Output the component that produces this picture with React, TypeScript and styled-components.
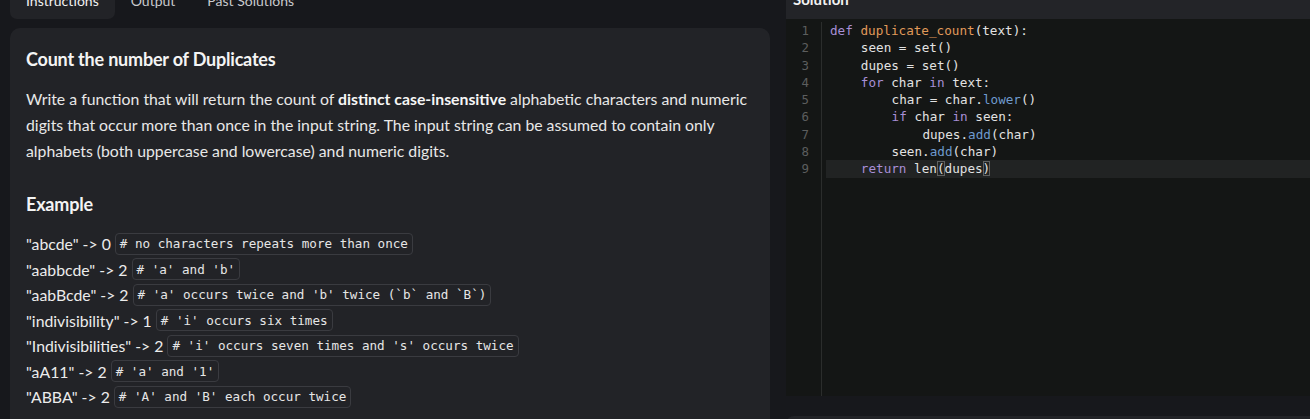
import { createGlobalStyle, styled } from "styled-components";

const GlobalStyle = createGlobalStyle`
    html, body {
        margin: 0;
        padding: 0;
        background: #17181c;
        overflow: hidden;
    }
    * { box-sizing: border-box; }
`;

const Page = styled.div`
    display: flex;
    gap: 16px;
    padding-left: 10px;
    width: 1310px;
    height: 419px;
    overflow: hidden;
    font-family: Lato, "Noto Sans", sans-serif;
    color: #ececec;
`;

/* 왼쪽: 탭 + 문제 설명 */
const LeftColumn = styled.div`
    width: 760px;
    flex-shrink: 0;
    display: flex;
    flex-direction: column;
`;

const TabBar = styled.div`
    display: flex;
    flex-shrink: 0;
    height: 40px;
    margin-top: -21px;
`;

const Tab = styled.div<{ $active?: boolean }>`
    display: flex;
    align-items: center;
    padding: 3px 16px 0;
    font-size: 14px;
    color: ${p => (p.$active ? "#f2f2f2" : "#c9cacd")};
    background: ${p => (p.$active ? "#222327" : "transparent")};
    border-radius: 0 0 7px 7px;
`;

const Card = styled.div`
    margin-top: 9px;
    flex: 1;
    min-height: 0;
    background: #222327;
    border-radius: 10px 10px 0 0;
    padding: 20px 16px;
`;

const Heading = styled.h2<{ $gap?: number }>`
    margin: ${p => p.$gap ?? 0}px 0 0;
    font-size: 18px;
    line-height: 22px;
    font-weight: 700;
    letter-spacing: -0.2px;
    color: #f4f4f4;
`;

const Paragraph = styled.p`
    margin: 16px 0 0;
    font-size: 15.8px;
    line-height: 26px;
    white-space: nowrap;
    color: #e8e8e8;
    strong { font-weight: 700; color: #f6f6f6; }
`;

const ExampleList = styled.div`
    margin-top: 16px;
    display: flex;
    flex-direction: column;
`;

const ExampleRow = styled.div`
    display: flex;
    align-items: center;
    gap: 4px;
    height: 25.5px;
    font-size: 15.8px;
    color: #ececec;
`;

const InlineCode = styled.code`
    display: inline-flex;
    align-items: center;
    height: 22px;
    padding: 0 4px;
    border: 1px solid #3a3b40;
    border-radius: 4px;
    font-family: "DejaVu Sans Mono", "Liberation Mono", monospace;
    font-size: 12.6px;
    color: #e6e6e6;
    white-space: pre;
`;

/* 오른쪽: 에디터 */
const RightColumn = styled.div`
    flex: 1;
    display: flex;
    flex-direction: column;
`;

const EditorHeader = styled.div`
    flex-shrink: 0;
    height: 40px;
    margin-top: -21px;
    background: #232428;
    display: flex;
    align-items: center;
    padding-left: 7px;
    font-size: 15px;
    font-weight: 700;
    color: #f2f2f2;
`;

const Editor = styled.div`
    flex-shrink: 0;
    height: 377px;
    background: #141615;
    display: flex;
    padding-top: 3px;
`;

const Gutter = styled.div`
    width: 36px;
    border-right: 1px solid #2b2d2c;
    display: flex;
    flex-direction: column;
    align-items: flex-end;
    padding-right: 12px;
`;

const LineNo = styled.div`
    height: 17.3px;
    line-height: 17.3px;
    font-family: "DejaVu Sans Mono", "Liberation Mono", monospace;
    font-size: 12.4px;
    color: #5c5e5e;
`;

const CodeArea = styled.div`
    flex: 1;
    padding-left: 4px;
`;

const CodeLine = styled.div<{ $active?: boolean }>`
    height: 17.3px;
    line-height: 17.3px;
    padding-left: 4px;
    font-family: "DejaVu Sans Mono", "Liberation Mono", monospace;
    font-size: 12.65px;
    color: #e2e2e2;
    white-space: pre;
    background: ${p => (p.$active ? "#212323" : "transparent")};
`;

const Indent = styled.span<{ $level: number }>`
    display: inline-block;
    width: ${p => p.$level * 30.8}px;
`;

const Kw = styled.span` color: #a88fd6; `;
const Fn = styled.span` color: #e09a5a; `;
const Method = styled.span` color: #6f9bcf; `;
const Bracket = styled.span`
    outline: 1px solid #5f6161;
    outline-offset: -1px;
`;

const BottomPanel = styled.div`
    flex-shrink: 0;
    margin-top: 20px;
    height: 30px;
    background: #222327;
    border-radius: 8px 0 0 0;
`;

const examples: [string, string][] = [
    ['"abcde" -> 0', "# no characters repeats more than once"],
    ['"aabbcde" -> 2', "# 'a' and 'b'"],
    ['"aabBcde" -> 2', "# 'a' occurs twice and 'b' twice (`b` and `B`)"],
    ['"indivisibility" -> 1', "# 'i' occurs six times"],
    ['"Indivisibilities" -> 2', "# 'i' occurs seven times and 's' occurs twice"],
    ['"aA11" -> 2', "# 'a' and '1'"],
    ['"ABBA" -> 2', "# 'A' and 'B' each occur twice"],
];

const App = () => {
    return (
        <>
            <GlobalStyle />
            <Page>
                <LeftColumn>
                    <TabBar>
                        <Tab $active>Instructions</Tab>
                        <Tab>Output</Tab>
                        <Tab>Past Solutions</Tab>
                    </TabBar>
                    <Card>
                        <Heading>Count the number of Duplicates</Heading>
                        <Paragraph>
                            Write a function that will return the count of <strong>distinct case-insensitive</strong> alphabetic characters and numeric
                            <br />
                            digits that occur more than once in the input string. The input string can be assumed to contain only
                            <br />
                            alphabets (both uppercase and lowercase) and numeric digits.
                        </Paragraph>
                        <Heading $gap={29}>Example</Heading>
                        <ExampleList>
                            {examples.map(([input, comment]) => (
                                <ExampleRow key={input}>
                                    <span>{input}</span>
                                    <InlineCode>{comment}</InlineCode>
                                </ExampleRow>
                            ))}
                        </ExampleList>
                    </Card>
                </LeftColumn>

                <RightColumn>
                    <EditorHeader>Solution</EditorHeader>
                    <Editor>
                        <Gutter>
                            {[1, 2, 3, 4, 5, 6, 7, 8, 9].map(n => (
                                <LineNo key={n}>{n}</LineNo>
                            ))}
                        </Gutter>
                        <CodeArea>
                            <CodeLine><Kw>def</Kw> <Fn>duplicate_count</Fn>(text):</CodeLine>
                            <CodeLine><Indent $level={1} />seen = set()</CodeLine>
                            <CodeLine><Indent $level={1} />dupes = set()</CodeLine>
                            <CodeLine><Indent $level={1} /><Kw>for</Kw> char <Kw>in</Kw> text:</CodeLine>
                            <CodeLine><Indent $level={2} />char = char.<Method>lower</Method>()</CodeLine>
                            <CodeLine><Indent $level={2} /><Kw>if</Kw> char <Kw>in</Kw> seen:</CodeLine>
                            <CodeLine><Indent $level={3} />dupes.<Method>add</Method>(char)</CodeLine>
                            <CodeLine><Indent $level={2} />seen.<Method>add</Method>(char)</CodeLine>
                            <CodeLine $active><Indent $level={1} /><Kw>return</Kw> len<Bracket>(</Bracket>dupes<Bracket>)</Bracket></CodeLine>
                        </CodeArea>
                    </Editor>
                    <BottomPanel />
                </RightColumn>
            </Page>
        </>
    );
};

export default App;
